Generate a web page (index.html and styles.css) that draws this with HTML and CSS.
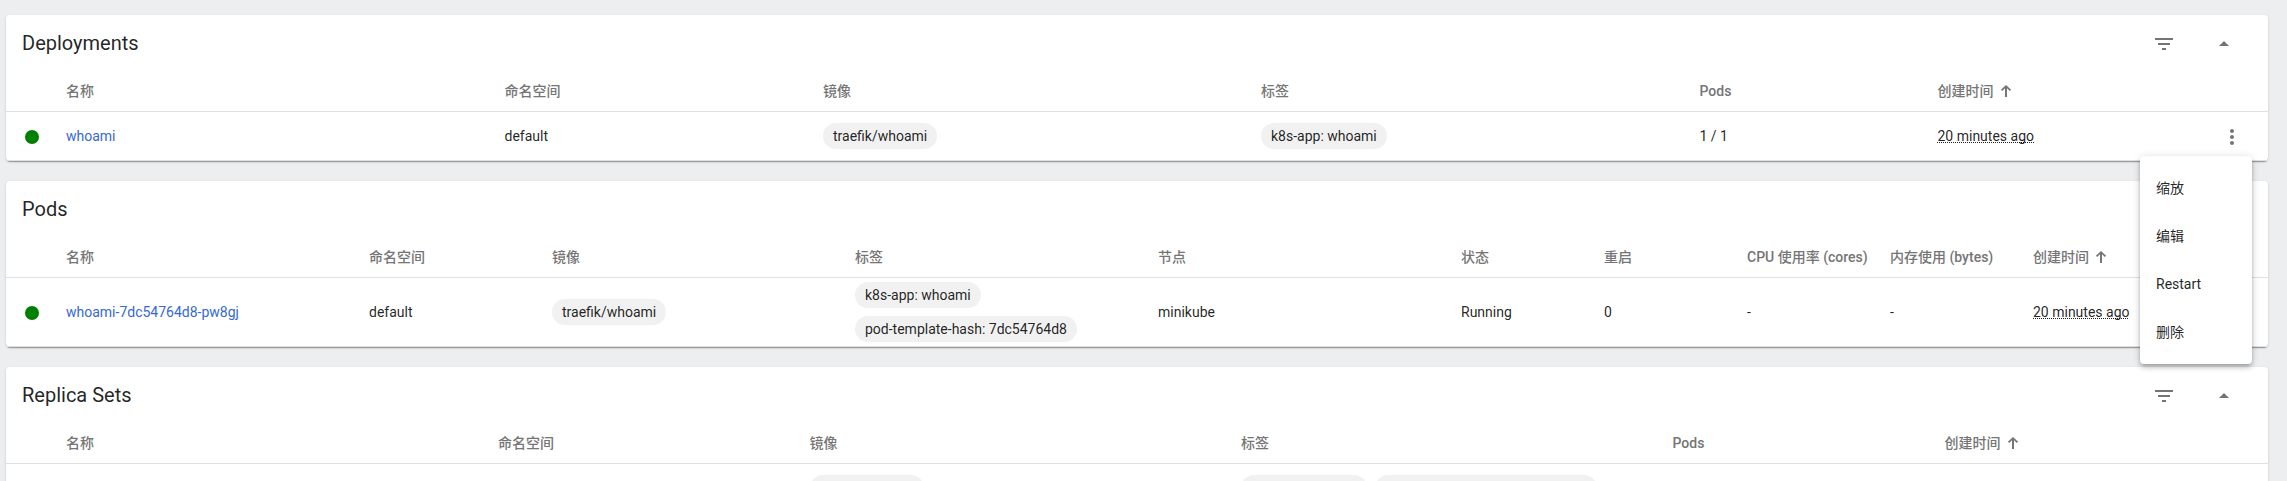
FILE: index.html
```html
<!DOCTYPE html>
<html lang="zh-CN">
<head>
<meta charset="utf-8">
<title>Workloads</title>
<link rel="stylesheet" href="styles.css">
</head>
<body>
<svg class="defs" width="0" height="0">
  <symbol id="filter" viewBox="0 0 24 24"><path d="M10 18h4v-2h-4v2zM3 6v2h18V6H3zm3 7h12v-2H6v2z"/></symbol>
  <symbol id="drop-up" viewBox="0 0 24 24"><path d="M7 14l5-5 5 5z"/></symbol>
  <symbol id="more" viewBox="0 0 24 24"><path d="M12 8c1.100 0 2-.9 2-2s-.9-2-2-2-2 .9-2 2 .9 2 2 2zm0 2c-1.100 0-2 .9-2 2s.9 2 2 2 2-.9 2-2-.9-2-2-2zm0 6c-1.100 0-2 .9-2 2s.9 2 2 2 2-.9 2-2-.9-2-2-2z"/></symbol>
  <symbol id="sort-up" viewBox="0 0 12 12"><path d="M5 12V3.200L2.200 6 .9 4.700 6 0l5.100 4.700L9.800 6 7 3.200V12z"/></symbol>
</svg>
<main class="page">
  <section class="card deployments">
    <header class="card-head">
      <h2 class="title">Deployments</h2>
      <svg class="icon filter"><use href="#filter"/></svg>
      <svg class="icon collapse"><use href="#drop-up"/></svg>
    </header>
    <div class="row head">
      <span></span><span>名称</span><span>命名空间</span><span>镜像</span><span>标签</span><span>Pods</span>
      <span class="sorted">创建时间<svg class="sort"><use href="#sort-up"/></svg></span><span></span>
    </div>
    <div class="row">
      <span class="dot"></span><a class="link">whoami</a><span>default</span>
      <span class="chips"><span class="chip">traefik/whoami</span></span>
      <span class="chips"><span class="chip">k8s-app: whoami</span></span>
      <span>1 / 1</span><span><span class="time">20 minutes ago</span></span>
      <span class="actions"><svg class="icon"><use href="#more"/></svg></span>
    </div>
    <div class="menu">
      <div class="item">缩放</div>
      <div class="item">编辑</div>
      <div class="item">Restart</div>
      <div class="item">删除</div>
    </div>
  </section>

  <section class="card pods">
    <header class="card-head"><h2 class="title">Pods</h2></header>
    <div class="row head">
      <span></span><span>名称</span><span>命名空间</span><span>镜像</span><span>标签</span><span>节点</span><span>状态</span><span>重启</span>
      <span>CPU 使用率 (cores)</span><span>内存使用 (bytes)</span>
      <span class="sorted">创建时间<svg class="sort"><use href="#sort-up"/></svg></span>
    </div>
    <div class="row">
      <span class="dot"></span><a class="link">whoami-7dc54764d8-pw8gj</a><span>default</span>
      <span class="chips"><span class="chip">traefik/whoami</span></span>
      <span class="chips"><span class="chip">k8s-app: whoami</span><span class="chip">pod-template-hash: 7dc54764d8</span></span>
      <span>minikube</span><span>Running</span><span>0</span><span>-</span><span>-</span>
      <span><span class="time">20 minutes ago</span></span>
    </div>
  </section>

  <section class="card replicas">
    <header class="card-head">
      <h2 class="title">Replica Sets</h2>
      <svg class="icon filter"><use href="#filter"/></svg>
      <svg class="icon collapse"><use href="#drop-up"/></svg>
    </header>
    <div class="row head">
      <span></span><span>名称</span><span>命名空间</span><span>镜像</span><span>标签</span><span>Pods</span>
      <span class="sorted">创建时间<svg class="sort"><use href="#sort-up"/></svg></span>
    </div>
    <div class="row">
      <span></span><span></span><span></span>
      <span class="chips"><span class="chip chip-image"></span></span>
      <span class="chips"><span class="chip chip-app"></span><span class="chip chip-hash"></span></span>
    </div>
  </section>
</main>
</body>
</html>
```
FILE: styles.css
```css
* { box-sizing: border-box; }
body {
  margin: 0;
  height: 481px;
  overflow: hidden;
  background: #eceef0;
  color: rgba(0, 0, 0, .87);
  font: 14px/20px Roboto, "Noto Sans CJK SC", sans-serif;
}
.defs { display: none; }
.page {
  display: flex;
  flex-direction: column;
  gap: 20px;
  height: 481px;
  overflow: hidden;
  padding: 15px 19px 0 6px;
}
.card {
  position: relative;
  flex: none;
  background: #fff;
  border-radius: 4px;
  box-shadow: 0 2px 1px -1px rgba(0, 0, 0, .2), 0 1px 1px rgba(0, 0, 0, .14), 0 1px 3px rgba(0, 0, 0, .12);
}
.deployments { z-index: 1; }
.card-head {
  display: flex;
  align-items: center;
  height: 56px;
  padding: 0 32px 0 16px;
}
.title {
  flex: 1;
  margin: 0;
  font-size: 20px;
  font-weight: 400;
  line-height: 28px;
}
.icon { width: 24px; height: 24px; fill: #757575; }
.filter, .collapse { margin-top: 2px; }
.collapse { margin-left: 36px; }
.row {
  display: grid;
  align-items: center;
  min-height: 49px;
  border-bottom: 1px solid #e0e0e0;
  padding-left: 16px;
  white-space: nowrap;
}
.head {
  min-height: 41px;
  color: #757575;
  font-weight: 500;
}
.deployments .row { grid-template-columns: 44px 438.500px 318.500px 438px 438.500px 238px 282px 24px; }
.pods .row { grid-template-columns: 44px 303px 183px 303px 303px 303px 143px 143px 143px 143px 1fr; }
.replicas .row { grid-template-columns: 44px 432px 311.500px 431.500px 431.500px 272px 1fr; }
.dot {
  width: 14px;
  height: 14px;
  margin: 1px 0 0 3px;
  border-radius: 50%;
  background: #008000;
}
.link { color: #3469d4; }
.chips { display: flex; flex-wrap: wrap; column-gap: 8px; }
.chip {
  height: 26px;
  margin: 4px 0;
  padding: 0 10px;
  border-radius: 13px;
  background: #f1f1f1;
  line-height: 26px;
}
.chip-image { width: 114px; }
.chip-app { width: 126px; }
.chip-hash { width: 222px; }
.time {
  text-decoration: underline dotted 1px;
  text-decoration-skip-ink: none;
  text-underline-offset: 1px;
}
.sorted { display: flex; align-items: center; gap: 6px; }
.sort { width: 12px; height: 12px; fill: #757575; }
.actions { display: flex; padding-top: 2px; }
.menu {
  position: absolute;
  z-index: 2;
  top: 141px;
  right: 16px;
  width: 112px;
  padding: 8px 0;
  border-radius: 4px;
  background: #fff;
  box-shadow: 0 2px 4px -1px rgba(0, 0, 0, .2), 0 4px 5px rgba(0, 0, 0, .14), 0 1px 10px rgba(0, 0, 0, .12);
}
.item { height: 48px; padding: 0 16px; line-height: 48px; }
```
